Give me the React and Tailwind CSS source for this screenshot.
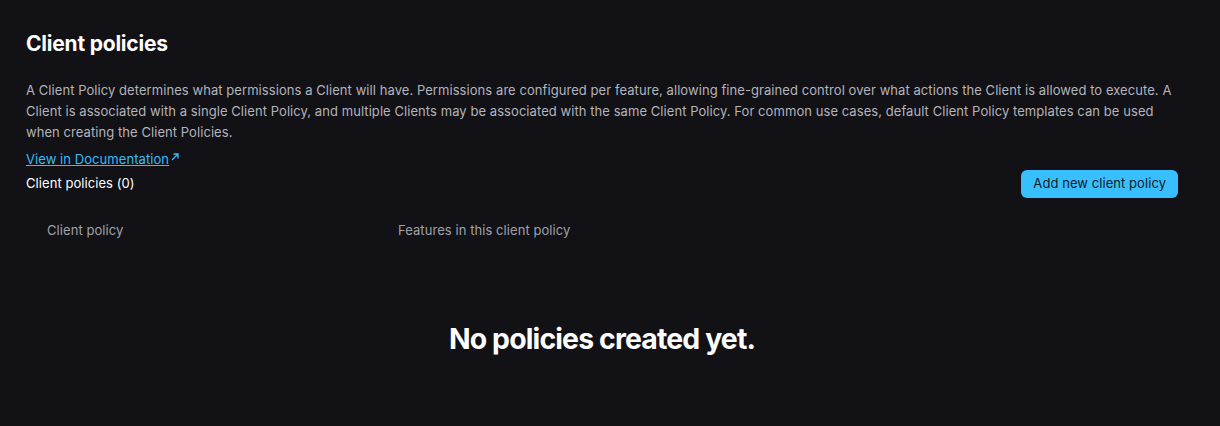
export default function App() {
    return (
        <div className="min-h-[426px] bg-[#111116] pl-[26px] pr-[42px] pt-[30px] text-[13px] tracking-[0.005em] text-[#b4b4bb]" style={{ fontFamily: 'Inter, "Noto Sans", sans-serif' }}>
            <h1 className="text-[21px] font-bold leading-[28px] tracking-[-0.01em] text-white">Client policies</h1>

            <p className="mt-[22px] leading-[21px]">
                A Client Policy determines what permissions a Client will have. Permissions are configured per feature, allowing fine-grained control over what actions the Client is allowed to execute. A Client is associated with a single Client Policy, and multiple Clients may be associated with the same Client Policy. For common use cases, default Client Policy templates can be used when creating the Client Policies.
            </p>

            <a href="#" className="mt-[6px] inline-flex items-center text-[#38bdf8] underline leading-[20px]">
                View in Documentation
                <svg width="10" height="10" viewBox="0 0 10 10" fill="none" stroke="currentColor" strokeWidth="1.3" className="ml-[1px] -mt-[4px]">
                    <path d="M2 8 L8 2 M3.5 2 H8 V6.5" />
                </svg>
            </a>

            <div className="flex items-center justify-between">
                <span className="text-white">Client policies (0)</span>
                <button className="h-[28px] rounded-md bg-[#38bfff] px-[12px] text-[13px] text-[#0f1a24]">
                    Add new client policy
                </button>
            </div>

            <div className="mt-[23px] grid grid-cols-[351px_1fr] px-[21px] text-[#a1a1a8]">
                <span>Client policy</span>
                <span>Features in this client policy</span>
            </div>

            <div className="mt-[78px] text-center text-[28.4px] font-bold tracking-[-0.03em] text-white">
                No policies created yet.
            </div>
        </div>
    )
}
